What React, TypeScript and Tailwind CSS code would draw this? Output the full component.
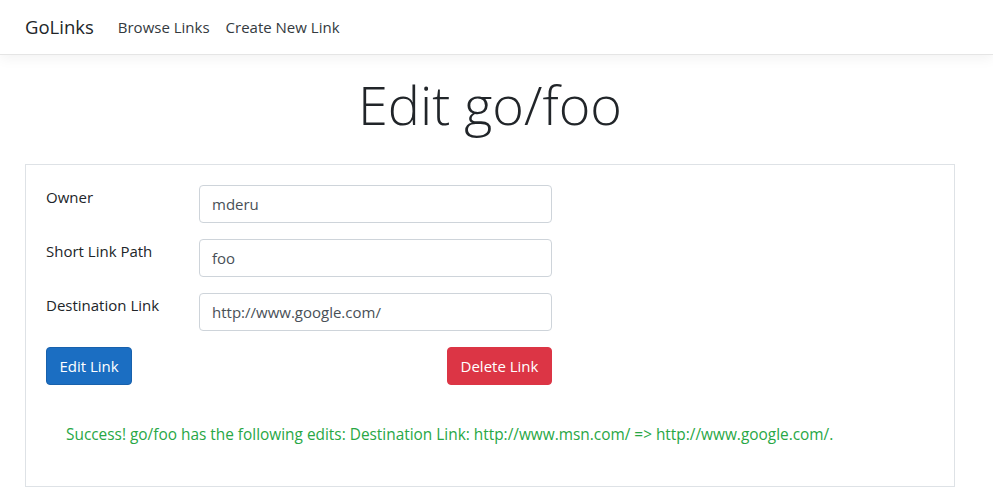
import React from "react";

export default function App() {
  const font = { fontFamily: '"Open Sans", "Noto Sans", sans-serif' };
  return (
    <div className="min-h-[497px] bg-white text-[#212529]" style={font}>
      <nav className="h-[55px] border-b border-[#e5e5e5] bg-white shadow-[0_4px_12px_rgba(0,0,0,0.05)] flex items-center pl-[25px]">
        <span className="text-[18.5px] text-[#212529] mr-[24px]">GoLinks</span>
        <span className="text-[15px] text-[#343a40] mr-[16px]">Browse Links</span>
        <span className="text-[15px] text-[#343a40]">Create New Link</span>
      </nav>
      <div className="w-[930px] ml-[25px]">
        <h1 className="text-center text-[54px] font-light leading-[1.2] mt-[17px] mb-[27px] text-[#212529]">Edit go/foo</h1>
        <div className="border border-[#dee2e6] px-[20px] pt-[20px] pb-[39px]">
          <div className="w-[506px]">
            {[
              ["Owner", "mderu"],
              ["Short Link Path", "foo"],
              ["Destination Link", "http://www.google.com/"],
            ].map(([label, value]) => (
              <div key={label} className="flex mb-[16px]">
                <div className="w-[153px] text-[15px] leading-[24px]">{label}</div>
                <div className="w-[353px] h-[38px] border border-[#ced4da] rounded-[4px] px-[12px] flex items-center text-[15px] text-[#495057]">
                  {value}
                </div>
              </div>
            ))}
            <div className="flex justify-between">
              <button className="h-[38px] w-[86px] rounded-[4px] bg-[#1b6ec2] border border-[#1861ac] text-white text-[15px]" style={font}>
                Edit Link
              </button>
              <button className="h-[38px] w-[105px] rounded-[4px] bg-[#dc3545] border border-[#dc3545] text-white text-[15px]" style={font}>
                Delete Link
              </button>
            </div>
          </div>
          <p className="mt-[38px] pl-[20px] text-[15.4px] leading-[24px] text-[#28a745]">
            Success! go/foo has the following edits: Destination Link: http://www.msn.com/ =&gt; http://www.google.com/.
          </p>
        </div>
      </div>
    </div>
  );
}
